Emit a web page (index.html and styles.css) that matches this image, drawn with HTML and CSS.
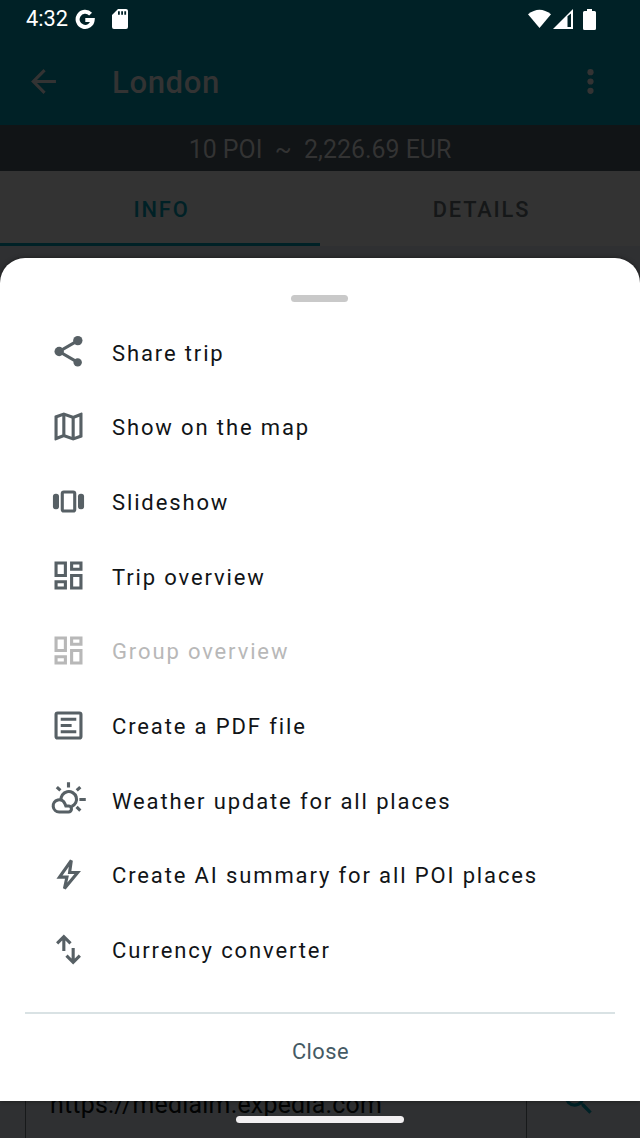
FILE: index.html
```html
<!DOCTYPE html>
<html lang="en">
<head>
<meta charset="utf-8">
<title>London</title>
<link rel="stylesheet" href="styles.css">
</head>
<body>
<div class="screen">
  <div class="page">
    <header class="statusbar">
      <span class="clock">4:32</span>
      <svg class="google" viewBox="0 0 20 20"><path d="M15.6 5.1A7.55 7.55 0 1 0 17.7 10.9H10.3" fill="none" stroke="#fff" stroke-width="4"/></svg>
      <svg class="sdcard" viewBox="0 0 16 20"><path fill="#fff" fill-rule="evenodd" d="M6 0h8a2 2 0 0 1 2 2v16a2 2 0 0 1-2 2H2a2 2 0 0 1-2-2V6zM6 2.2v3.5h1.8V2.2zM9.2 2.2v3.5H11V2.2zM12.3 2.2v3.5h1.8V2.2z"/></svg>
      <span class="spacer"></span>
      <svg class="wifi" viewBox="0 0 24 20"><path fill="#fff" d="M0 5Q12-4.4 24 5L12 19.5z"/></svg>
      <svg class="signal" viewBox="0 0 20 20"><path fill="#fff" fill-rule="evenodd" d="M20 0v20H0zM14.500 7.200V18H18V4.500z"/></svg>
      <svg class="battery" viewBox="0 0 13 21"><path fill="#fff" d="M4 0h5v2h2.5A1.5 1.5 0 0 1 13 3.500v16a1.500 1.500 0 0 1-1.500 1.500h-10A1.500 1.500 0 0 1 0 19.500v-16A1.500 1.500 0 0 1 1.500 2H4z"/></svg>
    </header>
    <div class="appbar">
      <svg class="icon back" viewBox="0 0 24 24"><path d="M20 11H7.830l5.590-5.590L12 4l-8 8 8 8 1.410-1.410L7.830 13H20z"/></svg>
      <h1 class="title">London</h1>
      <svg class="icon more" viewBox="0 0 24 24"><circle cx="12" cy="6" r="2"/><circle cx="12" cy="12" r="2"/><circle cx="12" cy="18" r="2"/></svg>
    </div>
    <div class="summary">10 POI&nbsp; ~&nbsp; 2,226.69 EUR</div>
    <nav class="tabs">
      <div class="tab tab-active">INFO</div>
      <div class="tab">DETAILS</div>
    </nav>
    <div class="content">
      <div class="field">
        <div class="url">https://mediaim.expedia.com</div>
        <div class="search"><svg class="icon" viewBox="0 0 24 24"><path d="M15.500 14h-.790l-.280-.270A6.470 6.470 0 0 0 16 9.500 6.500 6.500 0 1 0 9.500 16c1.610 0 3.090-.590 4.230-1.570l.270.280v.790l5 4.990L20.490 19zm-6 0C7.010 14 5 11.990 5 9.500S7.010 5 9.500 5 14 7.010 14 9.500 11.990 14 9.500 14z"/></svg></div>
      </div>
    </div>
  </div>

  <section class="sheet">
    <div class="handle"></div>
    <ul class="menu">
      <li class="item"><svg class="icon" viewBox="0 0 24 24"><path d="M18 5L6 12l12 7" fill="none" stroke="currentColor" stroke-width="2"/><circle cx="18" cy="5" r="3"/><circle cx="6" cy="12" r="3"/><circle cx="17.900" cy="19" r="2.700"/></svg><span>Share trip</span></li>
      <li class="item"><svg class="icon" viewBox="0 0 24 24"><path d="M20.500 3l-.160.030L15 5.100 9 3 3.360 4.900c-.210.070-.360.250-.360.480V20.500c0 .280.220.500.500.500l.160-.030L9 18.900l6 2.100 5.640-1.900c.210-.070.360-.250.360-.480V3.500c0-.280-.220-.500-.500-.500zM10 5.470l4 1.400v11.660l-4-1.400zm-5 .990l3-1.010v11.700l-3 1.160zm14 11.080l-3 1.010V6.860l3-1.160z"/></svg><span>Show on the map</span></li>
      <li class="item"><svg class="icon" viewBox="0 0 24 24"><rect x="2" y="7" width="3.900" height="10" rx="1.800"/><rect x="18.100" y="7" width="3.900" height="10" rx="1.800"/><rect x="8" y="5.900" width="8" height="12.200" rx="1" fill="none" stroke="currentColor" stroke-width="2"/></svg><span>Slideshow</span></li>
      <li class="item"><svg class="icon" viewBox="0 0 24 24"><path d="M19 5v2h-4V5zM9 5v6H5V5zm10 8v6h-4v-6zM9 17v2H5v-2zM21 3h-8v6h8zM11 3H3v10h8zm10 8h-8v10h8zm-10 4H3v6h8z"/></svg><span>Trip overview</span></li>
      <li class="item item-disabled"><svg class="icon" viewBox="0 0 24 24"><path d="M19 5v2h-4V5zM9 5v6H5V5zm10 8v6h-4v-6zM9 17v2H5v-2zM21 3h-8v6h8zM11 3H3v10h8zm10 8h-8v10h8zm-10 4H3v6h8z"/></svg><span>Group overview</span></li>
      <li class="item"><svg class="icon" viewBox="0 0 24 24"><path fill-rule="evenodd" d="M5 3h14a2 2 0 0 1 2 2v14a2 2 0 0 1-2 2H5a2 2 0 0 1-2-2V5a2 2 0 0 1 2-2zm0 2v14h14V5zM7 7h10v2H7zM7 11h7v2H7zM7 15h10v2H7z"/></svg><span>Create a PDF file</span></li>
      <li class="item"><svg class="icon" viewBox="0 0 24 24"><g fill="none" stroke="currentColor" stroke-width="2"><path d="M7.200 12.500A5 5 0 1 1 14 16.500"/><path d="M6 20a3.900 3.900 0 1 1 3.700-5.300l.600 1.500H12a1.900 1.900 0 0 1 0 3.800z"/><path d="M12 .900v3.400M4.500 4l2.300 2.200M19.600 4l-2.300 2.200M19 12h4.100M17.200 16.700l2.400 2.400"/></g></svg><span>Weather update for all places</span></li>
      <li class="item"><svg class="icon" viewBox="0 0 24 24"><path d="M13.800 3L6.200 13.700h4.800L9.400 21 17.900 10.700h-5.200z" fill="none" stroke="currentColor" stroke-width="2"/></svg><span>Create AI summary for all POI places</span></li>
      <li class="item"><svg class="icon" viewBox="0 0 24 24"><g fill="none" stroke="currentColor" stroke-width="2"><path d="M9 13V3.700M4.700 8L9 3.700 13.300 8M15 11v9.300M10.700 16l4.300 4.300 4.300-4.300"/></g></svg><span>Currency converter</span></li>
    </ul>
    <div class="footer">Close</div>
  </section>
  <div class="gesture"></div>
</div>
</body>
</html>
```
FILE: styles.css
```css
* { box-sizing: border-box; }
body { margin: 0; font-family: Roboto, sans-serif; }
.screen { position: relative; width: 640px; height: 1138px; overflow: hidden; background: #2f3032; }
.page { height: 100%; display: flex; flex-direction: column; }
.icon { width: 39px; height: 39px; padding: .830px; flex: none; fill: currentColor; display: block; }

.statusbar { height: 38px; flex: none; display: flex; align-items: center; padding: 0 44px 0 26px; background: #002126; color: #fff; }
.clock { font-size: 21.800px; width: 49px; line-height: 38px; }
.google { width: 20px; height: 20px; }
.sdcard { width: 16px; height: 20px; margin-left: 17px; }
.spacer { flex: 1; }
.wifi { width: 23px; height: 20px; margin-right: 2px; }
.signal { width: 20px; height: 20px; margin-right: 10px; }
.battery { width: 13px; height: 21px; }

.appbar { height: 86.500px; flex: none; display: flex; align-items: center; padding: 0 30px 0 24px; background: #002126; color: #333; }
.title { flex: 1; margin: 0 0 0 49px; padding-top: 3px; font-size: 31.100px; font-weight: 500; letter-spacing: .600px; line-height: 38px; }
.summary { height: 46.500px; flex: none; display: flex; align-items: center; justify-content: center; padding-top: 3px; background: #111416; color: #333; font-size: 24.900px; white-space: pre; }
.tabs { height: 75px; flex: none; display: flex; background: #333; }
.tab { flex: 1; display: flex; align-items: center; justify-content: center; padding: 4px 0 0 3px; border-bottom: 3px solid transparent; font-size: 21.800px; font-weight: 500; letter-spacing: 1.850px; color: #151718; }
.tab-active { color: #002126; border-bottom-color: #002126; }
.content { flex: 1; display: flex; align-items: flex-end; padding: 0 0 0 25px; }
.field { width: 100%; height: 70px; display: flex; border-left: 1.500px solid #17191a; color: #020303; }
.url { width: 501px; padding: 21px 0 0 24px; font-size: 24.900px; letter-spacing: .230px; line-height: 32px; border-right: 1.500px solid #17191a; }
.search { padding: 13px 0 0 32px; color: #002126; }

.sheet { position: absolute; left: 0; right: 0; top: 258.400px; height: 842.400px; display: flex; flex-direction: column; background: #fff; border-radius: 25px 25px 0 0; box-shadow: 0 0 4px rgba(0, 0, 0, .5); }
.handle { width: 57px; height: 7px; margin: 37.100px 0 0 291px; border-radius: 3.500px; background: #c9c9c9; }
.menu { list-style: none; margin: 12px 0 0; padding: 0; flex: 1; }
.item { height: 74.670px; display: flex; align-items: center; gap: 24px; padding-left: 49px; color: #576065; font-size: 22px; letter-spacing: 1.870px; }
.item span { color: #111417; padding-top: 2.500px; }
.item-disabled, .item-disabled span { color: #b8b8b8; }
.footer { height: 89px; margin: 0 25px; display: flex; align-items: center; justify-content: center; padding: 0 0 12px 1px; border-top: 2px solid #d9e2e4; color: #455a64; font-size: 21.800px; letter-spacing: .500px; }
.gesture { position: absolute; left: 236px; top: 1116px; width: 168px; height: 7px; border-radius: 3.500px; background: #f2eff1; }
```
